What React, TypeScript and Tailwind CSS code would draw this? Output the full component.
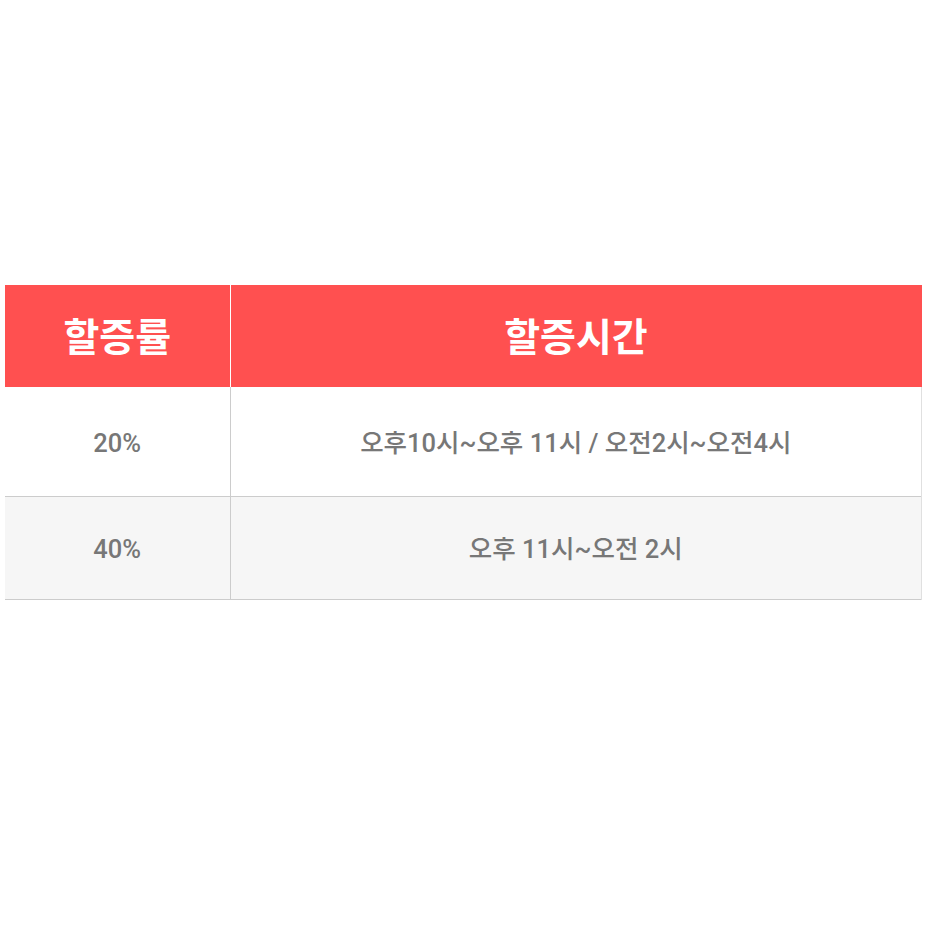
const ROWS = [
  { rate: "20%", time: "오후10시~오후 11시 / 오전2시~오전4시", bg: "bg-white", h: "h-[109px]" },
  { rate: "40%", time: "오후 11시~오전 2시", bg: "bg-[#f6f6f6]", h: "h-[103px]" },
];

export default function App() {
  return (
    <div
      className="min-h-screen bg-white pt-[285px]"
      style={{ fontFamily: "Roboto, 'Noto Sans CJK KR', sans-serif" }}
    >
      <table className="ml-[5px] w-[917px] border-collapse table-fixed">
        <colgroup>
          <col className="w-[225px]" />
          <col />
        </colgroup>
        <thead>
          <tr className="h-[102px] bg-[#ff5050]">
            <th className="border-r border-white pt-1 text-[39px] font-bold text-white">할증률</th>
            <th className="pt-1 text-[39px] font-bold text-white">할증시간</th>
          </tr>
        </thead>
        <tbody>
          {ROWS.map((r) => (
            <tr key={r.rate} className={`${r.h} ${r.bg} border-b border-[#cccccc]`}>
              <td className="border-r border-[#cccccc] pt-1 text-center text-[25.5px] font-medium text-[#777777]">
                {r.rate}
              </td>
              <td className="border-r border-[#e0e0e0] pt-1 text-center text-[25.5px] font-medium text-[#777777]">
                {r.time}
              </td>
            </tr>
          ))}
        </tbody>
      </table>
    </div>
  );
}
